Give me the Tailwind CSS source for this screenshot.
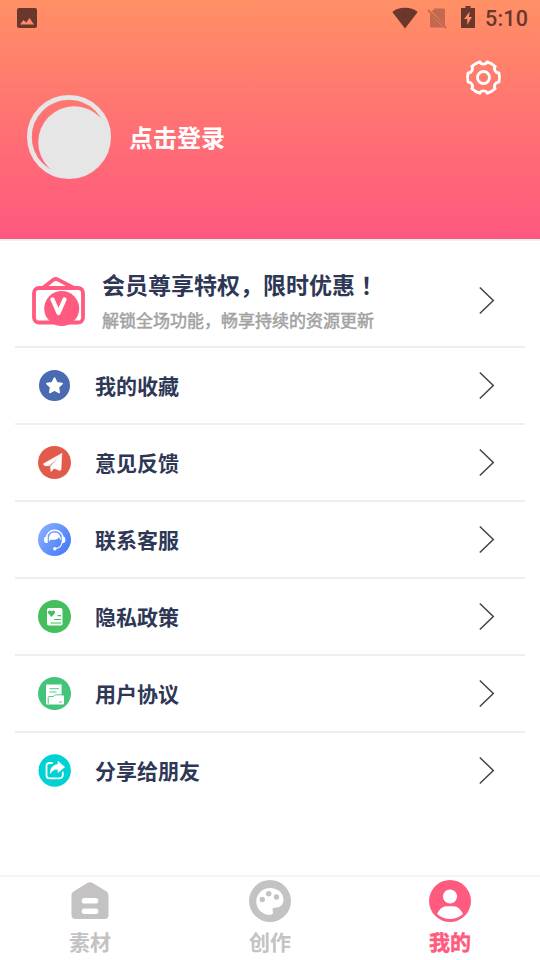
<!DOCTYPE html>
<html lang="zh-CN">
<head>
<meta charset="utf-8">
<title>我的</title>
<script src="https://cdn.jsdelivr.net/npm/@tailwindcss/browser@4"></script>
</head>
<body class="w-[540px] h-[960px] overflow-hidden bg-white font-['Noto_Sans_CJK_SC',sans-serif]">
<div class="flex flex-col h-[960px]">
  <header class="h-[241px] shrink-0 border-b-2 border-[#eeeeee] bg-linear-to-b/srgb from-[#ff9065] via-[#ff7272] via-50% to-[#ff5880] flex flex-col">
    <div class="h-9 shrink-0 flex items-center justify-between pl-[17px] pr-3 text-[#69372b]">
      <svg width="20" height="20" viewBox="0 0 20 20"><path fill="currentColor" fill-rule="evenodd" d="M2 0h16a2 2 0 0 1 2 2v16a2 2 0 0 1-2 2H2a2 2 0 0 1-2-2V2a2 2 0 0 1 2-2zM3 16.500h14L12.500 10l-3.300 4.600-2.700-2.700z"/></svg>
      <div class="flex items-center">
        <svg width="26" height="22" viewBox="0 0 26 22"><path fill="currentColor" d="M.3 5Q5.500 .8 13 .8T25.700 5L13 21.500z"/></svg>
        <svg class="ml-[9px]" width="20" height="22" viewBox="0 0 20 22"><path fill="currentColor" opacity=".4" d="M7.500 1.500h9a1.500 1.500 0 0 1 1.500 1.500v15.500L4.800 4.500zM3 6.500 16.500 20.500H4.500A1.500 1.500 0 0 1 3 19z"/><path d="M1 3l18 18" stroke="currentColor" stroke-width="1.700" opacity=".48"/></svg>
        <svg class="ml-[14px] -mt-[2px]" width="14" height="22" viewBox="0 0 14 22"><path fill="currentColor" fill-rule="evenodd" d="M4.500 0h5v2H14v20H0V2h4.500zM8.700 5.500 3 13h3.200v6L11 11H8z"/></svg>
        <span class="ml-[10px] w-[43px] font-[Roboto,sans-serif] font-medium text-[21.500px] leading-[22px] tracking-[0.2px] whitespace-nowrap relative top-[1px]">5:10</span>
      </div>
    </div>
    <div class="flex justify-end pr-[38px] pt-[23px]">
      <svg width="37" height="37" viewBox="-18.500 -18.500 37 37" fill="none" stroke="#fff" stroke-width="2.800" stroke-linejoin="round"><path d="M15.450-4.650Q16.600 0 15.450 4.650C12.160 4.130 9.660 8.470 11.750 11.050Q8.300 14.400 3.700 15.700C2.500 12.600-2.500 12.600-3.700 15.700Q-8.300 14.400-11.750 11.050C-9.660 8.470-12.160 4.130-15.450 4.650Q-16.600 0-15.450-4.650C-12.160-4.130-9.660-8.470-11.750-11.050Q-8.300-14.400-3.700-15.700C-2.500-12.600 2.500-12.600 3.700-15.700Q8.300-14.400 11.750-11.050C9.660-8.470 12.160-4.130 15.450-4.650z"/><circle r="6"/></svg>
    </div>
    <div class="flex items-center pl-[27px] -mt-[1px]">
      <svg width="84" height="84" viewBox="0 0 84 84"><clipPath id="avatar"><circle cx="42" cy="42" r="41"/></clipPath><circle cx="42" cy="42" r="39.600" fill="none" stroke="#e6e6e6" stroke-width="4.800"/><circle cx="47.200" cy="47.200" r="36" fill="#e6e6e6" clip-path="url(#avatar)"/></svg>
      <span class="ml-[18px] text-2xl font-bold text-white">点击登录</span>
    </div>
  </header>

  <main class="flex-1 px-[15px] text-[#2e3856]">
    <div class="h-[107px] border-b-2 border-[#eeeeee] flex items-center pl-[16px] pr-[30px] pt-[14px]">
      <svg class="shrink-0 mt-[2px]" width="56" height="52" viewBox="0 0 56 52"><g fill="none" stroke="#ff5a80" stroke-width="3.800"><path d="M12.500 11.500 22 4Q24.500 2.300 27 3.600L42 11.500"/><rect x="3" y="12" width="49" height="34.500" rx="5"/></g><circle cx="30.700" cy="32.500" r="17.500" fill="#ff5a80"/><path d="M21.500 23.500 27.500 37 33.500 23.500" fill="none" stroke="#fff" stroke-width="4.300" stroke-linecap="round" stroke-linejoin="round"/></svg>
      <div class="ml-[15px] -mt-[2px] flex-1 whitespace-nowrap">
        <div class="text-[23px] leading-[34px] font-bold">会员尊享特权，限时优惠<span class="font-['Noto_Sans_CJK_TC',sans-serif]" lang="zh-TW">！</span></div>
        <div class="mt-[6px] text-[17px] leading-[26px] font-normal text-[#a2a2a2] [-webkit-text-stroke:0.5px_#a2a2a2]">解锁全场功能，畅享持续的资源更新</div>
      </div>
      <svg width="17" height="31" viewBox="-0.300 -0.500 17 31"><path d="M1.500 2 15 15 1.500 28" fill="none" stroke="#444" stroke-width="1.500"/></svg>
    </div>

    <div class="h-[77px] border-b-2 border-[#eeeeee] flex items-center pl-[22px] pr-[30px]">
      <svg width="35" height="35" viewBox="0 0 35 35"><circle cx="17.500" cy="17.500" r="15.500" fill="#4a6bb1"/><path fill="#fff" stroke="#fff" stroke-width="1.600" stroke-linejoin="round" d="M17.500 10l2.400 4.800 5.200.8-3.700 3.700.8 5.200-4.700-2.400-4.700 2.400.8-5.200-3.700-3.700 5.200-.8z"/></svg>
      <span class="ml-[23px] -mt-[1px] flex-1 text-[21px] leading-[30px] font-bold">我的收藏</span>
      <svg width="17" height="31" viewBox="-0.300 -0.500 17 31"><path d="M1.500 2 15 15 1.500 28" fill="none" stroke="#444" stroke-width="1.500"/></svg>
    </div>
    <div class="h-[77px] border-b-2 border-[#eeeeee] flex items-center pl-[22px] pr-[30px]">
      <svg width="35" height="35" viewBox="0 0 35 35"><circle cx="17.500" cy="17.500" r="16.500" fill="#e25b4a"/><path fill="#fff" stroke="#fff" stroke-width=".6" stroke-linejoin="round" d="M24.800 8.500 6.500 18.700q0 1.800 2 2h3.700zM24.800 8.500 13.500 21.300l.5 5.200 3-3.200 6 2.200q1-.3 1-1.500z"/></svg>
      <span class="ml-[23px] -mt-[1px] flex-1 text-[21px] leading-[30px] font-bold">意见反馈</span>
      <svg width="17" height="31" viewBox="-0.300 -0.500 17 31"><path d="M1.500 2 15 15 1.500 28" fill="none" stroke="#444" stroke-width="1.500"/></svg>
    </div>
    <div class="h-[77px] border-b-2 border-[#eeeeee] flex items-center pl-[22px] pr-[30px]">
      <svg width="35" height="35" viewBox="0 0 35 35"><defs><linearGradient id="service" x1="0" y1="0.100" x2="1" y2="0.800"><stop stop-color="#8bb1ff"/><stop offset="1" stop-color="#4479f9"/></linearGradient></defs><circle cx="17.500" cy="17.500" r="16.500" fill="url(#service)"/><path d="M9.500 16a8.200 7.800 0 0 1 16.400 0" fill="none" stroke="#fff" stroke-width="1.400"/><path d="M10.700 14.600H9.500a2.500 3.200 0 0 0 0 6.400h1.200zM24.700 14.600h1.200a2.500 3.200 0 0 1 0 6.400h-1.200z" fill="#fff"/><path fill="#fff" d="M12 19.500C11.300 13.500 13.500 10.600 17.700 10.600S24 13.500 23.700 18.500Q22.800 17 22 15.200Q20 18.300 13.400 17.700z"/><path d="M25 20.500c-.5 3.700-2.600 5.700-7 6" fill="none" stroke="#fff" stroke-width="1.200"/><circle cx="17.800" cy="26.700" r="1.700" fill="#fff"/></svg>
      <span class="ml-[23px] -mt-[1px] flex-1 text-[21px] leading-[30px] font-bold">联系客服</span>
      <svg width="17" height="31" viewBox="-0.300 -0.500 17 31"><path d="M1.500 2 15 15 1.500 28" fill="none" stroke="#444" stroke-width="1.500"/></svg>
    </div>
    <div class="h-[77px] border-b-2 border-[#eeeeee] flex items-center pl-[22px] pr-[30px]">
      <svg width="35" height="35" viewBox="0 0 35 35"><circle cx="17.500" cy="17.500" r="16.500" fill="#45bf5e"/><rect x="10" y="9" width="15.500" height="17.500" rx="1.800" fill="#fff"/><path fill="#45bf5e" d="M14.500 18 11.200 14.300c-1.300-2.400 1.800-4 3.300-1.900 1.500-2.100 4.600-.5 3.300 1.900z"/><path d="M20.500 16.700h3.600M17 20.500h7.100M13.500 24h10.600" stroke="#45bf5e" stroke-width="1.200"/></svg>
      <span class="ml-[23px] -mt-[1px] flex-1 text-[21px] leading-[30px] font-bold">隐私政策</span>
      <svg width="17" height="31" viewBox="-0.300 -0.500 17 31"><path d="M1.500 2 15 15 1.500 28" fill="none" stroke="#444" stroke-width="1.500"/></svg>
    </div>
    <div class="h-[77px] border-b-2 border-[#eeeeee] flex items-center pl-[22px] pr-[30px]">
      <svg width="35" height="35" viewBox="0 0 35 35"><circle cx="17.500" cy="17.500" r="16.500" fill="#42c578"/><path fill="#fff" d="M10 8.500h15v11H27V27.500a1 1 0 0 1-1 1H10a1 1 0 0 1-1-1v-18a1 1 0 0 1 1-1z"/><path d="M12.500 12.700h9.500M12.500 16h7" stroke="#42c578" stroke-width=".9"/><path d="M11.200 28V21.300q0-.8.800-.8h4.500l1.800-1.700h6.800V8.500M22 26h3" fill="none" stroke="#42c578" stroke-width=".9"/></svg>
      <span class="ml-[23px] -mt-[1px] flex-1 text-[21px] leading-[30px] font-bold">用户协议</span>
      <svg width="17" height="31" viewBox="-0.300 -0.500 17 31"><path d="M1.500 2 15 15 1.500 28" fill="none" stroke="#444" stroke-width="1.500"/></svg>
    </div>
    <div class="h-[77px] flex items-center pl-[22px] pr-[30px] pb-[2px]">
      <svg width="35" height="35" viewBox="0 0 35 35"><circle cx="17.700" cy="17.500" r="16.200" fill="#00d1d3"/><path d="M15 10h-2.500a3 3 0 0 0-3 3v9.300a3 3 0 0 0 3 3h10.300a3 3 0 0 0 3-3v-2.800" fill="none" stroke="#fff" stroke-width="1.800" stroke-linecap="round"/><path fill="#fff" stroke="#fff" stroke-width=".6" stroke-linejoin="round" d="M21 8.300 27.700 14 21 19.500v-3.300c-3.800-.2-6 1.300-7.600 4.300-.4-5 2.600-8.800 7.600-9z"/></svg>
      <span class="ml-[23px] -mt-[1px] flex-1 text-[21px] leading-[30px] font-bold">分享给朋友</span>
      <svg width="17" height="31" viewBox="-0.300 -0.500 17 31"><path d="M1.500 2 15 15 1.500 28" fill="none" stroke="#444" stroke-width="1.500"/></svg>
    </div>
  </main>

  <nav class="h-[85px] shrink-0 border-t-2 border-[#f4f4f4] grid grid-cols-3 text-[21px] leading-[30px] font-bold text-[#c4c2c3]">
    <div class="flex flex-col items-center pt-[3px]">
      <svg width="42" height="42" viewBox="0 0 42 42"><path fill="currentColor" fill-rule="evenodd" d="M18.300 3Q21 1.400 23.700 3L37.500 11.500Q39.500 12.800 39.500 15V35a4 4 0 0 1-4 4H6.500a4 4 0 0 1-4-4V15Q2.500 12.800 4.500 11.500zM15.500 18a2.800 2.800 0 0 0 0 5.600h11a2.800 2.800 0 0 0 0-5.600zM15.500 28.500a2.800 2.800 0 0 0 0 5.600h11a2.800 2.800 0 0 0 0-5.600z"/></svg>
      <span class="mt-[4px]">素材</span>
    </div>
    <div class="flex flex-col items-center pt-[3px]">
      <svg width="42" height="42" viewBox="0 0 42 42"><circle cx="21" cy="21" r="21" fill="currentColor"/><path fill="#fff" d="M21 8c8 0 13.500 5 13.500 11.500 0 5.500-3.500 8-7.500 8-3 0-4 1-3.200 3.500.8 2.200-.3 3.800-2.800 3.800-8 0-13.700-6-13.700-13.400S13.500 8 21 8z"/><g fill="currentColor"><circle cx="13.300" cy="19.500" r="2.700"/><circle cx="19.700" cy="13.700" r="2.700"/><circle cx="27.500" cy="17" r="2.700"/></g></svg>
      <span class="mt-[4px]">创作</span>
    </div>
    <div class="flex flex-col items-center pt-[3px] text-[#ff5a80]">
      <svg width="42" height="42" viewBox="0 0 42 42"><circle cx="21" cy="21" r="21" fill="currentColor"/><circle cx="21" cy="16.500" r="7" fill="#fff"/><path fill="#fff" d="M8 34Q12 26.300 17 26.300h8Q30 26.300 34 34Q28 39 21 39T8 34z"/></svg>
      <span class="mt-[4px] [-webkit-text-stroke:0.5px_#ff5a80]">我的</span>
    </div>
  </nav>
</div>
</body>
</html>
